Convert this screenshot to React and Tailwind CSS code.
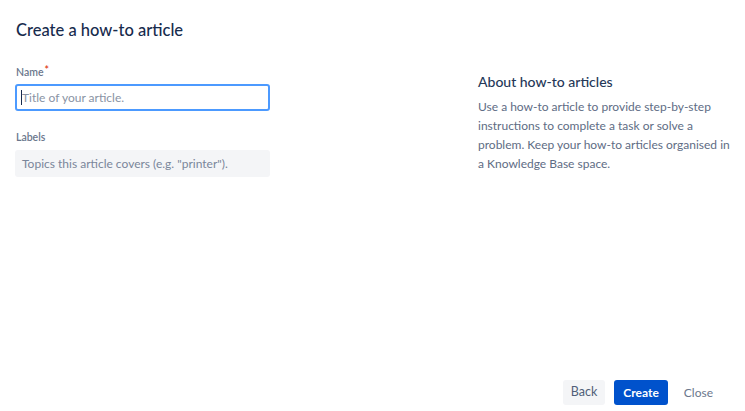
import React from 'react';

const font = { fontFamily: 'Lato, "Noto Sans", sans-serif' };

const App = () => {
  return (
    <div className="h-[411px] w-[745px] bg-white flex flex-col text-[#172b4d]" style={font}>
      <div className="flex flex-1">
        <div className="w-[465px] shrink-0 pl-[15px] pt-[19px]">
          <h1 className="text-[16.5px] font-medium leading-[22px] pl-px">Create a how-to article</h1>

          <div className="mt-[24px]">
            <label className="flex text-[10.5px] font-semibold text-[#6b778c] leading-[14px] pl-px">
              Name<span className="text-[#de350b] ml-px -mt-[2px]">*</span>
            </label>
            <div className="mt-[5px] w-[255px] h-[27px] rounded-[3px] border-2 border-[#4c9aff] bg-white flex items-center px-[4px]">
              <span className="w-px h-[15px] bg-[#172b4d]" />
              <span className="text-[12px] text-[#8993a4]">Title of your article.</span>
            </div>
          </div>

          <div className="mt-[19px]">
            <label className="block text-[10.5px] font-semibold text-[#6b778c] leading-[14px] pl-px">Labels</label>
            <div className="mt-[6px] w-[255px] h-[27px] rounded-[3px] bg-[#f4f5f7] flex items-center px-[7px]">
              <span className="text-[12px] text-[#7a869a]">Topics this article covers (e.g. "printer").</span>
            </div>
          </div>
        </div>

        <div className="pt-[73px] pl-[13px]">
          <h2 className="text-[14px] font-medium leading-[18px] text-[#253858]">About how-to articles</h2>
          <p className="mt-[6px] text-[12px] leading-[19px] text-[#5e6c84] w-[256px]">
            Use a how-to article to provide step-by-step instructions to complete a task or solve a problem. Keep your how-to articles organised in a Knowledge Base space.
          </p>
        </div>
      </div>

      <div className="flex justify-end items-center pr-[24px] pb-[6px]">
        <button className="h-[25px] px-[8px] rounded-[3px] bg-[#f4f5f7] text-[12.5px] text-[#505f79]">Back</button>
        <button className="ml-[9px] h-[25px] px-[9px] rounded-[3px] bg-[#0052cc] text-[12px] font-bold text-white">Create</button>
        <button className="ml-[8px] h-[25px] px-[8px] rounded-[3px] text-[12px] text-[#6b778c]">Close</button>
      </div>
    </div>
  );
};

export default App;
